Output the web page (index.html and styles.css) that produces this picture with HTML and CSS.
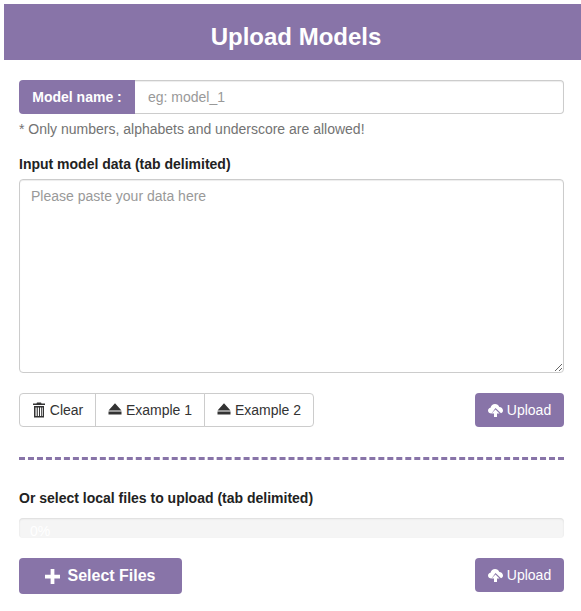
FILE: index.html
```html
<!DOCTYPE html>
<html lang="en">
<head>
    <meta charset="UTF-8">
    <meta name="viewport" content="width=device-width, initial-scale=1.0">
    <title>Upload Models</title>
    <link rel="stylesheet" href="styles.css">
</head>
<body>

    <div class="page-title">Upload Models</div>

    <div class="content">
        <!-- Model name -->
        <div class="input-group">
            <span class="input-addon">Model name :</span>
            <input class="name-input" type="text" placeholder="eg: model_1">
        </div>
        <p class="hint">* Only numbers, alphabets and underscore are allowed!</p>

        <!-- Paste data -->
        <label class="field-label paste-label">Input model data (tab delimited)</label>
        <textarea class="data-input" placeholder="Please paste your data here"></textarea>

        <div class="button-row">
            <div class="btn-group">
                <button class="btn btn-default btn-clear">
                    <svg class="icon-trash" viewBox="0 0 14 16"><path fill="#333" fill-rule="evenodd" d="M5 .5h4l.5 1H13V3H1V1.500H4.500zM2 4h10v11.500H2zM3.500 5.500v8.500h1.200V5.500zM5.800 5.500v8.500h1.200V5.500zM8 5.500v8.500h1.200V5.500zM10 5.500v8.500h.7V5.500z"/></svg>
                    Clear
                </button>
                <button class="btn btn-default btn-example">
                    <svg class="icon" viewBox="0 0 14 14"><path fill="#333" d="M7 .3 13.500 7.500H.5zM.5 8.500h13v3H.5z"/></svg>
                    Example 1
                </button>
                <button class="btn btn-default btn-example">
                    <svg class="icon" viewBox="0 0 14 14"><path fill="#333" d="M7 .3 13.500 7.500H.5zM.5 8.500h13v3H.5z"/></svg>
                    Example 2
                </button>
            </div>
            <button class="btn btn-purple btn-upload">
                <svg class="icon-cloud" viewBox="0 0 15 14"><path fill="#fff" d="M3.500 10.500C1.500 10.500 0 9.200 0 7.500 0 6 1.100 4.900 2.500 4.700 3 2.500 4.800 1 7 1c2 0 3.700 1.200 4.300 3 2 .1 3.700 1.600 3.700 3.500 0 1.300-.8 2.400-2 2.800L7.500 5z"/><path fill="#fff" d="M7.500 6.500 11.500 10.500H9V14H6v-3.500H3.500z"/></svg>
                Upload
            </button>
        </div>

        <hr class="divider">

        <!-- Local files -->
        <label class="field-label files-label">Or select local files to upload (tab delimited)</label>
        <div class="progress"><div class="progress-bar">0%</div></div>

        <div class="button-row files-row">
            <button class="btn btn-purple btn-select">
                <svg class="icon-plus" viewBox="0 0 16 16"><path fill="#fff" d="M6 0h4v6h6v4h-6v6H6v-6H0V6h6z"/></svg>
                Select Files
            </button>
            <button class="btn btn-purple btn-upload">
                <svg class="icon-cloud" viewBox="0 0 15 14"><path fill="#fff" d="M3.500 10.500C1.500 10.500 0 9.200 0 7.500 0 6 1.100 4.900 2.500 4.700 3 2.500 4.800 1 7 1c2 0 3.700 1.200 4.300 3 2 .1 3.700 1.600 3.700 3.500 0 1.300-.8 2.400-2 2.800L7.500 5z"/><path fill="#fff" d="M7.500 6.500 11.500 10.500H9V14H6v-3.500H3.500z"/></svg>
                Upload
            </button>
        </div>
    </div>

</body>
</html>
```

FILE: styles.css
```css
/* General */
* {
    box-sizing: border-box;
}

body {
    font-family: "Liberation Sans", Arial, sans-serif;
    font-size: 14px;
    line-height: 20px;
    color: #333;
    background: #fff;
    margin: 0;
    padding: 4px 0 0 4px;
    overflow: hidden;
}

.page-title {
    height: 56px;
    padding-left: 7px;
    line-height: 66px;
    background: #8874a8;
    color: #fff;
    font-size: 24px;
    font-weight: bold;
    text-align: center;
}

.content {
    padding: 20px 17px 0 15px;
}

/* Model name */
.input-group {
    display: flex;
    height: 34px;
}

.input-addon {
    width: 116px;
    background: #8874a8;
    color: #fff;
    font-weight: bold;
    text-align: center;
    line-height: 34px;
    border-radius: 4px 0 0 4px;
}

.name-input {
    flex: 1;
    min-width: 0;
    padding: 6px 12px 6px 13px;
    border: 1px solid #ccc;
    border-left: none;
    border-radius: 0 4px 4px 0;
    font: inherit;
    box-shadow: inset 0 1px 1px rgba(0, 0, 0, 0.075);
}

.hint {
    margin: 5px 0 0;
    color: #737373;
}

.field-label {
    display: block;
    font-weight: bold;
    color: #222;
}

.paste-label {
    margin-top: 15px;
    margin-bottom: 5px;
}

.data-input {
    display: block;
    width: 100%;
    height: 194px;
    padding: 6px 11px;
    border: 1px solid #ccc;
    border-radius: 4px;
    font: inherit;
    box-shadow: inset 0 1px 1px rgba(0, 0, 0, 0.075);
}

.name-input::placeholder,
.data-input::placeholder {
    color: #999;
    opacity: 1;
}

/* Buttons */
.button-row {
    display: flex;
    justify-content: space-between;
    align-items: flex-start;
    margin-top: 20px;
}

.btn {
    display: inline-flex;
    align-items: center;
    justify-content: center;
    height: 34px;
    padding: 0;
    border: 1px solid transparent;
    border-radius: 4px;
    font: inherit;
    white-space: nowrap;
}

.btn-group {
    display: flex;
}

.btn-default {
    background: #fff;
    border-color: #ccc;
    color: #333;
    border-radius: 0;
    margin-left: -1px;
}

.btn-default:first-child {
    margin-left: 0;
    border-radius: 4px 0 0 4px;
}

.btn-default:last-child {
    border-radius: 0 4px 4px 0;
}

.btn-clear {
    width: 77px;
}

.btn-example {
    width: 110px;
}

.btn-purple {
    background: #8874a8;
    color: #fff;
}

.btn-upload {
    width: 89px;
}

.btn-select {
    width: 163px;
    height: 36px;
    font-size: 16px;
    font-weight: bold;
}

.icon {
    width: 14px;
    height: 14px;
    margin-right: 4px;
}

.icon-trash {
    width: 14px;
    height: 16px;
    margin-right: 4px;
}

.icon-cloud {
    width: 15px;
    height: 14px;
    margin-right: 4px;
}

.icon-plus {
    width: 15px;
    height: 15px;
    margin-right: 7px;
}

.divider {
    height: 0;
    margin: 30px 0 0;
    border: none;
    border-top: 3px dashed #8874a8;
}

.files-label {
    margin-top: 28px;
    margin-bottom: 10px;
}

/* Progress */
.progress {
    height: 20px;
    overflow: hidden;
    background: #f5f5f5;
    border-radius: 4px;
    box-shadow: inset 0 1px 2px rgba(0, 0, 0, 0.1);
}

.progress-bar {
    width: 0;
    padding: 3px 0 0 11px;
    color: #fff;
    white-space: nowrap;
}

.files-row {
    margin-top: 20px;
}
```
